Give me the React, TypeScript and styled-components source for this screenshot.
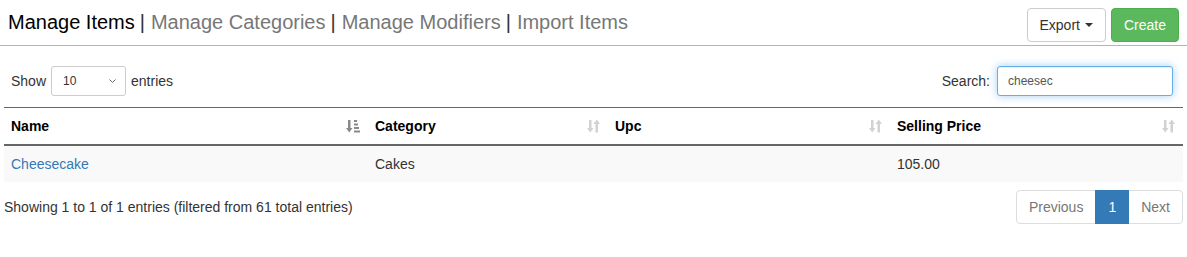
import React from "react";
import styled, { createGlobalStyle, css } from "styled-components";

const GlobalStyle = createGlobalStyle`
  html, body { margin: 0; padding: 0; background: #fff; }
  body {
    font-family: "Liberation Sans", Arial, Helvetica, sans-serif;
    font-size: 14px;
    line-height: 20px;
    color: #333;
  }
  * { box-sizing: border-box; }
`;

const Page = styled.div`
  width: 1187px;
`;

const TopBar = styled.div`
  display: flex;
  justify-content: space-between;
  align-items: flex-start;
  padding: 8px 8px 3px 8px;
  border-bottom: 1px solid #b4b4b4;
`;

const Tabs = styled.div`
  padding-top: 3px;
  font-size: 20px;
  line-height: 22px;
  color: #333;
  white-space: nowrap;
`;

const Tab = styled.span<{ $active?: boolean }>`
  color: ${(p) => (p.$active ? "#000" : "#777")};
`;

const Sep = styled.span`
  color: #333;
  padding: 0 6px 0 5px;
`;

const Actions = styled.div`
  display: flex;
  gap: 5px;
`;

const Button = styled.button<{ $variant?: "default" | "success" }>`
  font-family: inherit;
  font-size: 14px;
  line-height: 20px;
  padding: 6px 12px;
  border-radius: 4px;
  border: 1px solid #ccc;
  background: #fff;
  color: #333;
  display: inline-flex;
  align-items: center;
  gap: 4px;
  cursor: pointer;
  ${(p) =>
    p.$variant === "success" &&
    css`
      background: #5cb85c;
      border-color: #4cae4c;
      color: #fff;
    `}
`;

const Caret = styled.span`
  display: inline-block;
  width: 0;
  height: 0;
  border-top: 4px solid #333;
  border-left: 4px solid transparent;
  border-right: 4px solid transparent;
  margin-left: 1px;
`;

const Content = styled.div`
  padding: 0 4px;
`;

const Controls = styled.div`
  display: flex;
  justify-content: space-between;
  align-items: center;
  margin-top: 20px;
  padding: 0 10px 0 7px;
  height: 30px;
`;

const Label = styled.label`
  display: flex;
  align-items: center;
  gap: 5px;
  font-weight: normal;
  white-space: nowrap;
`;

const SelectWrap = styled.span`
  position: relative;
  display: inline-flex;
`;

const Select = styled.select`
  appearance: none;
  -webkit-appearance: none;
  width: 75px;
  height: 30px;
  padding: 5px 10px 5px 11px;
  font-family: inherit;
  font-size: 12px;
  color: #333;
  border: 1px solid #ccc;
  border-radius: 3px;
  background: #fff;
`;

const Chevron = styled.svg`
  position: absolute;
  right: 10px;
  top: 13px;
  pointer-events: none;
`;

const SearchInput = styled.input`
  width: 176px;
  height: 30px;
  margin-left: 2px;
  padding: 5px 10px;
  font-family: inherit;
  font-size: 12px;
  color: #555;
  border: 1px solid #66afe9;
  border-radius: 3px;
  outline: none;
  box-shadow: inset 0 1px 1px rgba(0, 0, 0, 0.075), 0 0 8px rgba(102, 175, 233, 0.6);
`;

const Table = styled.table`
  width: 1179px;
  margin-top: 11px;
  border-collapse: collapse;
  table-layout: fixed;
  border-top: 1px solid #666;
`;

const Th = styled.th<{ $w: number }>`
  width: ${(p) => p.$w}px;
  padding: 8px 8px 8px 7px;
  text-align: left;
  font-weight: bold;
  color: #000;
  border-bottom: 2px solid #666;
`;

const HeadInner = styled.div`
  display: flex;
  justify-content: space-between;
  align-items: center;
`;

const Row = styled.tr<{ $odd?: boolean }>`
  background: ${(p) => (p.$odd ? "#f9f9f9" : "#fff")};
`;

const Td = styled.td`
  padding: 8px 8px 8px 7px;
  color: #333;
`;

const Link = styled.a`
  color: #337ab7;
  text-decoration: none;
`;

const Footer = styled.div`
  display: flex;
  justify-content: space-between;
  align-items: center;
  margin-top: 8px;
`;

const Info = styled.div`
  color: #333;
  white-space: nowrap;
`;

const Pager = styled.ul`
  display: flex;
  list-style: none;
  margin: 0;
  padding: 0;
`;

const PageItem = styled.li<{ $active?: boolean; $first?: boolean; $last?: boolean }>`
  padding: 6px 12px;
  line-height: 20px;
  border: 1px solid #ddd;
  margin-left: -1px;
  color: #777;
  background: #fff;
  ${(p) => p.$first && css`margin-left: 0; border-radius: 4px 0 0 4px;`}
  ${(p) => p.$last && css`border-radius: 0 4px 4px 0;`}
  ${(p) =>
    p.$active &&
    css`
      background: #337ab7;
      border-color: #337ab7;
      color: #fff;
      position: relative;
      z-index: 1;
    `}
`;

const SortIcon = ({ color }: { color: string }) => (
  <svg width="13" height="14" viewBox="0 0 13 14" fill={color}>
    <rect x="2" y="1" width="2.5" height="9" />
    <polygon points="0,9 6.5,9 3.25,13.5" />
    <rect x="8.5" y="4" width="2.5" height="9.5" />
    <polygon points="6.5,5 13,5 9.75,0.5" />
  </svg>
);

const SortAttrIcon = ({ color }: { color: string }) => (
  <svg width="14" height="14" viewBox="0 0 14 14" fill={color}>
    <rect x="2" y="1" width="2.5" height="9" />
    <polygon points="0,9 6.5,9 3.25,13.5" />
    <rect x="8" y="1" width="3" height="2" />
    <rect x="8" y="4.5" width="4" height="2" />
    <rect x="8" y="8" width="5" height="2" />
    <rect x="8" y="11.5" width="6" height="2" />
  </svg>
);

const columns = [
  { name: "Name", w: 364, sorted: true },
  { name: "Category", w: 240 },
  { name: "Upc", w: 282 },
  { name: "Selling Price", w: 293 },
];

export default function App() {
  return (
    <Page>
      <GlobalStyle />
      <TopBar>
        <Tabs>
          <Tab $active>Manage Items</Tab>
          <Sep>|</Sep>
          <Tab>Manage Categories</Tab>
          <Sep>|</Sep>
          <Tab>Manage Modifiers</Tab>
          <Sep>|</Sep>
          <Tab>Import Items</Tab>
        </Tabs>
        <Actions>
          <Button>
            Export <Caret />
          </Button>
          <Button $variant="success">Create</Button>
        </Actions>
      </TopBar>
      <Content>
        <Controls>
          <Label>
            Show
            <SelectWrap>
              <Select defaultValue="10">
                <option value="10">10</option>
                <option value="25">25</option>
                <option value="50">50</option>
                <option value="100">100</option>
              </Select>
              <Chevron width="7" height="4" viewBox="0 0 7 4">
                <polyline points="0.5,0.5 3.5,3.5 6.5,0.5" fill="none" stroke="#666" strokeWidth="1" />
              </Chevron>
            </SelectWrap>
            entries
          </Label>
          <Label>
            Search:
            <SearchInput type="text" defaultValue="cheesec" autoFocus />
          </Label>
        </Controls>
        <Table>
          <thead>
            <tr>
              {columns.map((c) => (
                <Th key={c.name} $w={c.w}>
                  <HeadInner>
                    <span>{c.name}</span>
                    {c.sorted ? <SortAttrIcon color="#8a8a8a" /> : <SortIcon color="#d2d2d2" />}
                  </HeadInner>
                </Th>
              ))}
            </tr>
          </thead>
          <tbody>
            <Row $odd>
              <Td>
                <Link href="#">Cheesecake</Link>
              </Td>
              <Td>Cakes</Td>
              <Td></Td>
              <Td>105.00</Td>
            </Row>
          </tbody>
        </Table>
        <Footer>
          <Info>Showing 1 to 1 of 1 entries (filtered from 61 total entries)</Info>
          <Pager>
            <PageItem $first>Previous</PageItem>
            <PageItem $active>1</PageItem>
            <PageItem $last>Next</PageItem>
          </Pager>
        </Footer>
      </Content>
    </Page>
  );
}
